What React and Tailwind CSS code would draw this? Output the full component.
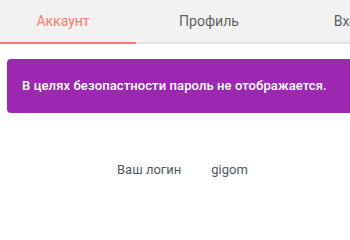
const tabs = [
  { label: 'Аккаунт', active: true },
  { label: 'Профиль', active: false },
  { label: 'Входы', active: false },
]

export default function App() {
  return (
    <div className="w-full h-[205px] overflow-hidden bg-white font-['Roboto','Liberation_Sans',sans-serif]">
      <div className="w-[440px]">
        {/* tab bar */}
        <div className="bg-[#f2f2f2] border-b-2 border-[#e3e3e3]">
          <div className="flex -ml-[10px] -mb-[2px]">
            {tabs.map((t) => (
              <div
                key={t.label}
                className={
                  t.active
                    ? 'w-[146px] h-[44px] flex items-center justify-center text-[14px] text-[#f57c6c] border-b-2 border-[#f57c6c]'
                    : 'w-[146px] h-[44px] flex items-center justify-center text-[14px] text-[#616161] border-b-2 border-transparent'
                }
              >
                {t.label}
              </div>
            ))}
            <div className="w-[10px]" />
          </div>
        </div>

        {/* notice */}
        <div className="mx-[7px] mt-[15px] h-[54px] rounded-[4px] bg-[#9c27b0] px-[15px] flex items-center text-[13px] font-medium tracking-[0.1px] text-white">
          В целях безопастности пароль не отображается.
        </div>

        {/* login row */}
        <div className="mt-[47px] ml-[117px] flex gap-[30px] text-[13px] leading-[20px] text-[#4f5966]">
          <span>Ваш логин</span>
          <span>gigom</span>
        </div>
      </div>
    </div>
  )
}
